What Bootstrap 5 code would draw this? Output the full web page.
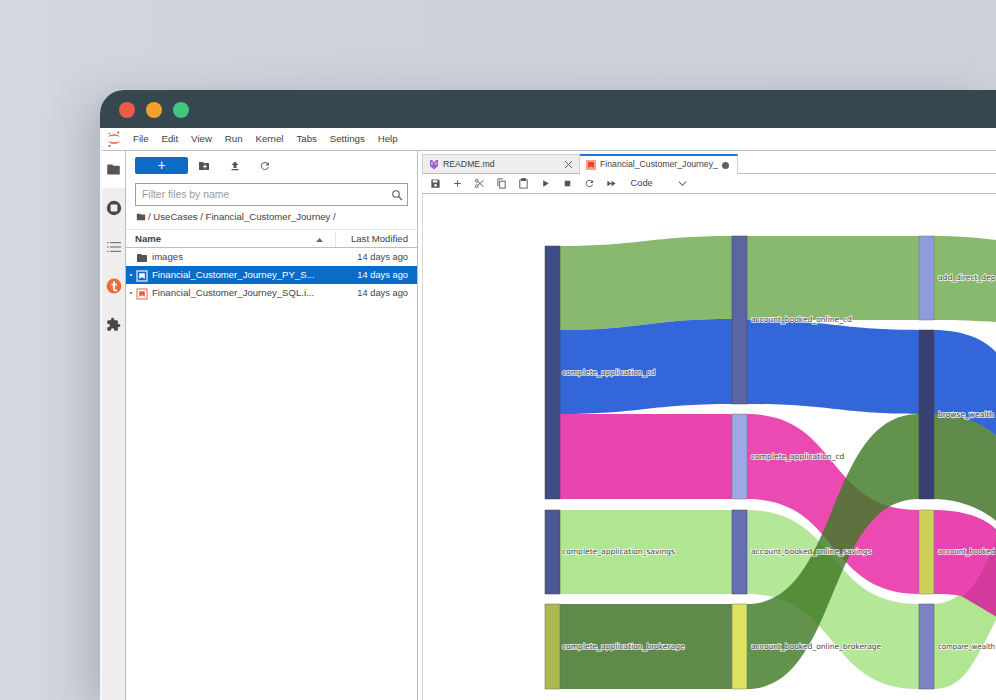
<!DOCTYPE html>
<html lang="en">
<head>
  <meta charset="UTF-8">
  <title>JupyterLab Sankey</title>
  <link href="https://cdn.jsdelivr.net/npm/bootstrap@5.3.0/dist/css/bootstrap.min.css" rel="stylesheet">
  <style>
    html, body { height: 700px; overflow: hidden; }
    body { background: linear-gradient(90deg, #d3d7de 0, #ced3db 30%, #cdd2da 100%); font-family: "Liberation Sans", Arial, sans-serif; color: #424242; padding: 90px 0 0 100px; }
    .lab-window { width: 896px; height: 610px; border-radius: 24px 0 0 0; overflow: hidden; background: #fff; box-shadow: -14px 8px 40px rgba(90, 100, 115, .3); }
    .title-bar { height: 38px; background: #37474f; padding: 1px 0 0 19px; gap: 11px; flex: none; }
    .dot { width: 16px; height: 16px; border-radius: 50%; }
    .dot-red { background: #ee5a49; }
    .dot-amber { background: #f5a02c; }
    .dot-green { background: #3fc77f; }
    .lab-body { flex: 1; min-height: 0; border-left: 2px solid #f7f7f7; }
    .menu-bar { height: 23px; border-bottom: 1px solid #bdbdbd; font-size: 9.7px; flex: none; }
    .menu-logo { width: 23px; }
    .menu-bar span { margin-right: 12.9px; }
    .side-bar { width: 24px; background: #eeeeee; border-right: 1px solid #bdbdbd; flex: none; }
    .side-item { height: 39px; }
    .side-item.active { background: #fff; height: 37px; }
    .file-panel { width: 292px; border-right: 1px solid #bdbdbd; flex: none; font-size: 9.6px; }
    .file-tools { height: 32px; padding: 6px 9px 0; }
    .new-btn { width: 53px; height: 17px; background: #0b6cc8; border: 0; border-radius: 2px; color: #fff; font-size: 14px; line-height: 17px; padding: 0; }
    .tool-group { height: 17px; margin-left: 1px; }
    .tool-icon { width: 30.5px; height: 17px; }
    .filter-box { height: 23px; margin: 0 9px; border: 1px solid #9e9e9e; padding: 0 4px 0 6px; color: #9a9a9a; font-size: 10.4px; flex: none; }
    .crumbs { height: 20px; padding-left: 10px; gap: 2px; margin-top: 1px; flex: none; }
    .head-row { height: 19px; padding-top: 2px; border-top: 1px solid #e6e6e6; border-bottom: 1px solid #bdbdbd; font-weight: 700; margin-top: 2px; flex: none; }
    .head-name { flex: 1; padding: 0 8px 0 9px; }
    .head-date { width: 82px; border-left: 1px solid #e6e6e6; font-weight: 400; padding-right: 9px; text-align: right; }
    .file-row { height: 18px; padding: 1px 9px 0 0; flex: none; }
    .file-row .dotcol { width: 10px; font-size: 7px; text-align: center; }
    .file-row .name { flex: 1; margin-left: 4px; white-space: nowrap; }
    .file-row .date { font-size: 9.3px; padding-top: 1px; }
    .file-row.selected { background: #0b6cc8; color: #fff; }
    .main-area { min-width: 0; flex: 1; padding-left: 4px; }
    .tab-bar { height: 20px; margin-top: 3px; border-bottom: 1px solid #bdbdbd; flex: none; font-size: 8.7px; }
    .doc-tab { width: 158px; background: #eeeeee; border: 1px solid #d0d0d0; border-bottom: 0; padding: 1px 6px 0; gap: 4px; }
    .doc-tab.current { background: #fff; border: 0; border-top: 2px solid #1976d2; margin-bottom: -1px; border-right: 1px solid #d0d0d0; padding: 0 8px 0 6px; }
    .tab-dot { width: 7px; height: 7px; background: #616161; border-radius: 50%; }
    .note-tools { height: 20px; border-bottom: 1px solid #bdbdbd; padding-left: 7.5px; font-size: 9.3px; flex: none; }
    .note-tools svg { margin-right: 11px; }
    .code-select { width: 47px; margin-left: 3px; }
    .plot { flex: 1; min-height: 0; overflow: hidden; border-left: 1px solid #d8d8d8; }
    .plot svg { display: block; }
    .plot text { font-family: "DejaVu Sans", sans-serif; font-size: 7.55px; fill: #444; paint-order: stroke; stroke: #fff; stroke-width: 1.6px; stroke-opacity: .85; }
  </style>
</head>
<body>
  <div class="lab-window d-flex flex-column">
    <div class="title-bar d-flex align-items-center">
      <div class="dot dot-red"></div>
      <div class="dot dot-amber"></div>
      <div class="dot dot-green"></div>
    </div>
    <div class="lab-body d-flex flex-column">
      <div class="menu-bar d-flex align-items-center">
        <div class="menu-logo d-flex justify-content-center">
          <svg width="14" height="18" viewBox="0 0 14 18"><path d="M1 7C3.5 3.2 10.5 3.2 13 7C10 5.2 4 5.2 1 7ZM1 11C3.5 14.8 10.5 14.8 13 11C10 12.8 4 12.8 1 11Z" fill="#e8602c"/><circle cx="11.3" cy="2.5" r="1" fill="#666"/><circle cx="2.3" cy="3.5" r=".8" fill="#777"/><circle cx="2.5" cy="16" r="1" fill="#666"/></svg>
        </div>
        <div class="ps-2"><span>File</span><span>Edit</span><span>View</span><span>Run</span><span>Kernel</span><span>Tabs</span><span>Settings</span><span>Help</span></div>
      </div>
      <div class="d-flex flex-grow-1" style="min-height:0">
        <div class="side-bar d-flex flex-column">
          <div class="side-item active d-flex align-items-center justify-content-center">
            <svg width="15" height="15" viewBox="0 0 24 24" fill="#555"><path d="M10 4H3a1 1 0 0 0-1 1v14a1 1 0 0 0 1 1h18a1 1 0 0 0 1-1V7a1 1 0 0 0-1-1h-9z"/></svg>
          </div>
          <div class="side-item d-flex align-items-center justify-content-center">
            <svg width="16" height="16" viewBox="0 0 16 16"><circle cx="8" cy="8" r="7.2" fill="#484848"/><rect x="4.6" y="4.6" width="6.8" height="6.8" rx=".8" fill="#eee"/></svg>
          </div>
          <div class="side-item d-flex align-items-center justify-content-center">
            <svg width="14" height="12" viewBox="0 0 14 12" fill="#7a7a7a"><rect x="0" y="1" width="1.6" height="1.2"/><rect x="3" y="1" width="11" height="1.2"/><rect x="0" y="5.4" width="1.6" height="1.2"/><rect x="3" y="5.4" width="11" height="1.2"/><rect x="0" y="9.8" width="1.6" height="1.2"/><rect x="3" y="9.8" width="11" height="1.2"/></svg>
          </div>
          <div class="side-item d-flex align-items-center justify-content-center">
            <svg width="16" height="16" viewBox="0 0 16 16"><circle cx="8" cy="8" r="7.4" fill="#ec6a3c"/><path d="M7 3.5h2v2.3h2v1.7H9v3.2c0 .8.6 1 2 .8v1.7c-2.6.5-4-.3-4-2.3V7.5H5.4V5.8H7z" fill="#fff"/></svg>
          </div>
          <div class="side-item d-flex align-items-center justify-content-center">
            <svg width="15" height="15" viewBox="0 0 24 24" fill="#484848"><path d="M20.5 11H19V7a2 2 0 0 0-2-2h-4V3.5a2.5 2.5 0 0 0-5 0V5H4a2 2 0 0 0-2 2v3.8h1.5a2.7 2.7 0 0 1 0 5.4H2V20a2 2 0 0 0 2 2h3.8v-1.5a2.7 2.7 0 0 1 5.4 0V22H17a2 2 0 0 0 2-2v-4h1.5a2.5 2.5 0 0 0 0-5z"/></svg>
          </div>
        </div>
        <div class="file-panel d-flex flex-column">
          <div class="file-tools d-flex">
            <button class="new-btn" type="button">+</button>
            <div class="tool-group d-flex align-items-start">
              <div class="tool-icon d-flex align-items-center justify-content-center"><svg width="12" height="12" viewBox="0 0 24 24" fill="#555"><path d="M10 4H3a1 1 0 0 0-1 1v14a1 1 0 0 0 1 1h18a1 1 0 0 0 1-1V7a1 1 0 0 0-1-1h-9zM18 14h-3v3h-2v-3h-3v-2h3V9h2v3h3z" fill-rule="evenodd"/></svg></div>
              <div class="tool-icon d-flex align-items-center justify-content-center"><svg width="12" height="12" viewBox="0 0 24 24" fill="#555"><path d="M9 16V10H5l7-7 7 7h-4v6zM5 18h14v2.5H5z"/></svg></div>
              <div class="tool-icon d-flex align-items-center justify-content-center"><svg width="12" height="12" viewBox="0 0 24 24" fill="#666"><path d="M17.7 6.3A8 8 0 1 0 19.7 14h-2.1a6 6 0 1 1-1.4-6.2L13 11h7V4z"/></svg></div>
            </div>
          </div>
          <div class="filter-box d-flex align-items-center justify-content-between">
            <span>Filter files by name</span>
            <svg width="12" height="12" viewBox="0 0 24 24" fill="none" stroke="#555" stroke-width="2.2"><circle cx="10" cy="10" r="6.5"/><path d="M15 15l7 7"/></svg>
          </div>
          <div class="crumbs d-flex align-items-center">
            <svg width="10" height="10" viewBox="0 0 24 24" fill="#555"><path d="M10 4H3a1 1 0 0 0-1 1v14a1 1 0 0 0 1 1h18a1 1 0 0 0 1-1V7a1 1 0 0 0-1-1h-9z"/></svg>
            <span>/ UseCases / Financial_Customer_Journey /</span>
          </div>
          <div class="head-row d-flex align-items-stretch">
            <div class="head-name d-flex align-items-center justify-content-between"><span>Name</span><svg width="7" height="4" viewBox="0 0 7 4" class="me-1"><path d="M0 4L3.5 0 7 4z" fill="#666"/></svg></div>
            <div class="head-date d-flex align-items-center justify-content-end">Last Modified</div>
          </div>
          <div class="file-row d-flex align-items-center">
            <div class="dotcol"></div>
            <svg width="12" height="12" viewBox="0 0 24 24" fill="#555"><path d="M10 4H3a1 1 0 0 0-1 1v14a1 1 0 0 0 1 1h18a1 1 0 0 0 1-1V7a1 1 0 0 0-1-1h-9z"/></svg>
            <div class="name">images</div><div class="date">14 days ago</div>
          </div>
          <div class="file-row selected d-flex align-items-center">
            <div class="dotcol">•</div>
            <svg width="12" height="12" viewBox="0 0 12 12"><rect x="1" y="1" width="10" height="10" fill="none" stroke="#fff" stroke-width="1.1"/><path d="M3.2 3.2h5.6v5.6L6 7.3 3.2 8.8z" fill="#fff"/></svg>
            <div class="name">Financial_Customer_Journey_PY_S...</div><div class="date">14 days ago</div>
          </div>
          <div class="file-row d-flex align-items-center">
            <div class="dotcol text-success">•</div>
            <svg width="12" height="12" viewBox="0 0 12 12"><rect x="1" y="1" width="10" height="10" fill="none" stroke="#ef6c5a" stroke-width="1.1"/><path d="M3.2 3.2h5.6v5.6L6 7.3 3.2 8.8z" fill="#ef5a48"/></svg>
            <div class="name">Financial_Customer_Journey_SQL.i...</div><div class="date">14 days ago</div>
          </div>
        </div>
        <div class="main-area d-flex flex-column">
          <div class="tab-bar d-flex">
            <div class="doc-tab d-flex align-items-center">
              <svg width="10" height="10" viewBox="0 0 10 10"><path d="M1 0h2l2 2.5L7 0h2v6L5 9.5 1 6z" fill="#a55bc9"/><path d="M3 2v3M7 2v3" stroke="#fff" stroke-width=".8"/></svg>
              <span class="flex-grow-1">README.md</span>
              <svg width="9" height="9" viewBox="0 0 9 9" stroke="#666" stroke-width="1"><path d="M1 1l7 7M8 1l-7 7"/></svg>
            </div>
            <div class="doc-tab current d-flex align-items-center">
              <svg width="10" height="10" viewBox="0 0 12 12"><rect width="12" height="12" fill="#f9a091"/><path d="M2.5 2.5h7v7L6 7.5l-3.5 2z" fill="#e8432e"/></svg>
              <span class="flex-grow-1 text-nowrap">Financial_Customer_Journey_</span>
              <div class="tab-dot flex-shrink-0"></div>
            </div>
          </div>
          <div class="note-tools d-flex align-items-center">
            <svg width="11" height="11" viewBox="0 0 24 24" fill="#555"><path d="M3 3h15l3 3v15H3zM6 5v5h10V5zM12 13a3 3 0 1 0 0 6 3 3 0 0 0 0-6z" fill-rule="evenodd"/></svg>
            <svg width="11" height="11" viewBox="0 0 24 24" fill="#555"><path d="M11 5h2v6h6v2h-6v6h-2v-6H5v-2h6z"/></svg>
            <svg width="11" height="11" viewBox="0 0 24 24" fill="none" stroke="#555" stroke-width="2"><circle cx="6" cy="6" r="3"/><circle cx="6" cy="18" r="3"/><path d="M8 8l13 11M8 16L21 5"/></svg>
            <svg width="11" height="11" viewBox="0 0 24 24" fill="none" stroke="#555" stroke-width="2"><rect x="8" y="7" width="12" height="15"/><path d="M4 18V2h11"/></svg>
            <svg width="11" height="11" viewBox="0 0 24 24" fill="none" stroke="#555" stroke-width="2"><rect x="4" y="4" width="16" height="18"/><rect x="8" y="1.5" width="8" height="4" fill="#555"/></svg>
            <svg width="11" height="11" viewBox="0 0 24 24" fill="#555"><path d="M7 5l12 7-12 7z"/></svg>
            <svg width="11" height="11" viewBox="0 0 24 24" fill="#555"><rect x="6" y="6" width="12" height="12"/></svg>
            <svg width="11" height="11" viewBox="0 0 24 24" fill="#666"><path d="M17.7 6.3A8 8 0 1 0 19.7 14h-2.1a6 6 0 1 1-1.4-6.2L13 11h7V4z"/></svg>
            <svg width="11" height="11" viewBox="0 0 24 24" fill="#555"><path d="M3 6l9 6-9 6zM12 6l9 6-9 6z"/></svg>
            <span class="code-select">Code</span>
            <svg width="9" height="9" viewBox="0 0 10 10" fill="none" stroke="#666" stroke-width="1.2"><path d="M1 3l4 4 4-4"/></svg>
          </div>
          <div class="plot">
            <svg width="573" height="506" viewBox="423 194 573 506">
              <!-- links, coordinates taken from the reference -->
              <path d="M560 246C640 246 650 236 732 236V319C650 319 640 330 560 330Z" fill="#89b86f"/>
              <path d="M560 330C640 330 650 319 732 319V404C650 404 640 414 560 414Z" fill="#3366d9"/>
              <path d="M560 414H732V499H560Z" fill="#ea44b0"/>
              <path d="M560 510H732V594H560Z" fill="#b0e691"/>
              <path d="M560 604H732V689H560Z" fill="#5f8a4a"/>
              <path d="M747 236H919V320H747Z" fill="#89b86f"/>
              <path d="M747 320C830 320 840 330 919 330V414C840 414 830 404 747 404Z" fill="#3366d9"/>
              <path d="M933 236C960 236 980 238 997 240V322C980 321 960 320 933 320Z" fill="#89b86f"/>
              <path d="M933 330C965 330 985 340 997 353V437C985 425 960 414 933 414Z" fill="#3366d9"/>
              <path d="M747 414C840 414 825 510 919 510V594C825 594 840 499 747 499Z" fill="#ea44b0" fill-opacity=".97"/>
              <path d="M747 510C840 510 825 604 919 604V689C825 689 840 594 747 594Z" fill="#b0e691" fill-opacity=".95"/>
              <path d="M747 604C840 604 825 414 919 414V499C825 499 840 689 747 689Z" fill="#3f7a24" fill-opacity=".82"/>
              <path d="M933 414C965 414 985 425 997 437V522C985 510 960 499 933 499Z" fill="#5f8a4a"/>
              <path d="M933 604C970 604 975 565 997 538V618C975 660 965 689 933 689Z" fill="#b0e691"/>
              <path d="M933 510C958 510 982 515 997 530V560C985 575 975 588 961 596C950 594 942 594 933 594Z" fill="#ea44b0"/>
              <path d="M961 596C976 588 986 565 997 538V617C985 610 975 604 961 596Z" fill="#d23a9b"/>
              <!-- nodes -->
              <rect x="545" y="246" width="15" height="253" fill="#3f4d87" stroke="#444" stroke-width=".5"/>
              <rect x="545" y="510" width="15" height="84" fill="#4c5796" stroke="#444" stroke-width=".5"/>
              <rect x="545" y="604" width="15" height="85" fill="#aeb84e" stroke="#666" stroke-width=".5"/>
              <rect x="732" y="236" width="15" height="168" fill="#5c65a1" stroke="#444" stroke-width=".5"/>
              <rect x="732" y="414" width="15" height="85" fill="#9ea8e6" stroke="#777" stroke-width=".5"/>
              <rect x="732" y="510" width="15" height="84" fill="#6570b3" stroke="#444" stroke-width=".5"/>
              <rect x="732" y="604" width="15" height="85" fill="#dde25f" stroke="#777" stroke-width=".5"/>
              <rect x="919" y="236" width="15" height="84" fill="#8f9bdb" stroke="#777" stroke-width=".5"/>
              <rect x="919" y="330" width="15" height="169" fill="#384073" stroke="#444" stroke-width=".5"/>
              <rect x="919" y="510" width="15" height="84" fill="#cfd157" stroke="#777" stroke-width=".5"/>
              <rect x="919" y="604" width="15" height="85" fill="#7a84c4" stroke="#555" stroke-width=".5"/>
              <!-- labels -->
              <text x="562" y="375">complete_application_cd</text>
              <text x="562" y="554">complete_application_savings</text>
              <text x="562" y="649">complete_application_brokerage</text>
              <text x="751" y="322">account_booked_online_cd</text>
              <text x="751" y="459">complete_application_cd</text>
              <text x="751" y="554">account_booked_online_savings</text>
              <text x="751" y="649">account_booked_online_brokerage</text>
              <text x="938" y="280">add_direct_dep</text>
              <text x="938" y="417">browse_wealth</text>
              <text x="938" y="554" textLength="57" lengthAdjust="spacingAndGlyphs">account_booked</text>
              <text x="938" y="649" textLength="57" lengthAdjust="spacingAndGlyphs">compare_wealth</text>
            </svg>
          </div>
        </div>
      </div>
    </div>
  </div>
  <script src="https://cdn.jsdelivr.net/npm/bootstrap@5.3.0/dist/js/bootstrap.bundle.min.js"></script>
</body>
</html>
